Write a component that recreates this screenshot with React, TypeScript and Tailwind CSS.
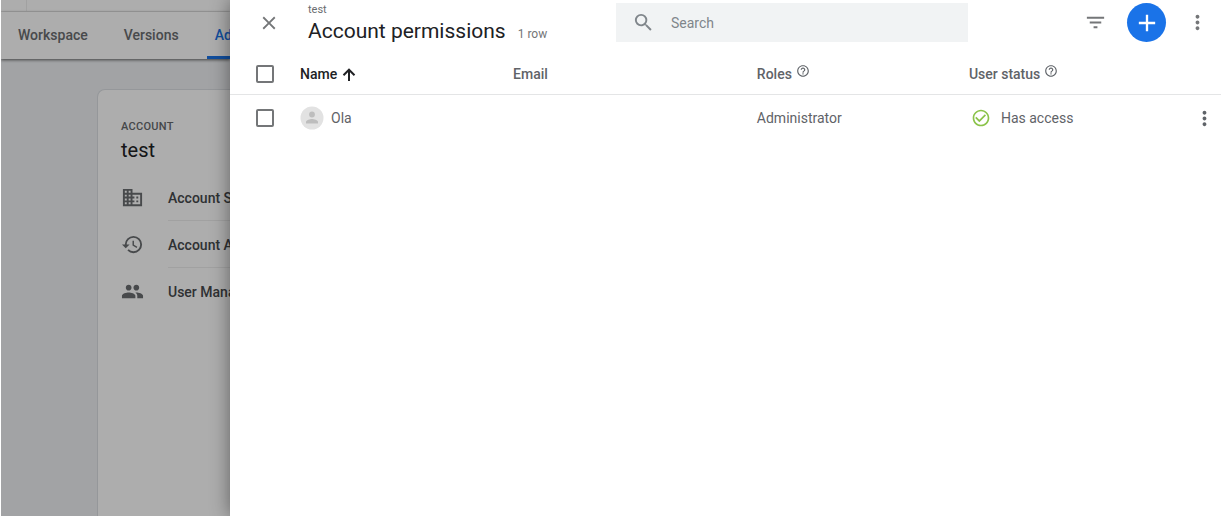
import {
  MdAdd,
  MdCheckCircleOutline,
  MdClose,
  MdDomain,
  MdFilterList,
  MdHelpOutline,
  MdHistory,
  MdMoreVert,
  MdPeople,
  MdSearch,
} from "react-icons/md";

const users = [{ name: "Ola", email: "", role: "Administrator", status: "Has access" }];

const accountLinks = [
  { label: "Account Settings", icon: MdDomain },
  { label: "Account Activity", icon: MdHistory },
  { label: "User Management", icon: MdPeople },
];

const checkboxClass =
  "block size-[18px] appearance-none rounded-[2px] border-2 border-[#747678] bg-white checked:bg-[#1a73e8]";

const AdminPage = () => {
  return (
    <div className="relative flex w-[230px] shrink-0 flex-col overflow-hidden border-l border-white bg-[#eff1f4] whitespace-nowrap">
      <div className="flex h-3 shrink-0 border-b border-[#eeeeee] bg-white">
        <div className="w-[26px] border-r border-[#eeeeee]" />
      </div>
      <nav className="z-10 flex h-[47px] shrink-0 bg-white pl-[17px] text-[14px] font-medium text-[#6a6d70] shadow-[0_1px_3px_rgba(0,0,0,0.6)]">
        <a href="#workspace" className="mr-9 flex items-center">
          Workspace
        </a>
        <a href="#versions" className="mr-7 flex items-center">
          Versions
        </a>
        <a
          href="#admin"
          className="flex items-center rounded-t-[3px] border-b-[3px] border-[#1a73e8] px-2 pt-[3px] text-[#1a73e8]"
        >
          Admin
        </a>
      </nav>
      <main className="flex grow flex-col pt-[30px] pl-24">
        <section className="w-80 grow rounded-tl-lg border border-b-0 border-[#dcdfe3] bg-white pt-7 pl-[23px]">
          <p className="text-[11px] leading-[18px] font-medium tracking-wide text-[#66696c]">ACCOUNT</p>
          <h2 className="mt-[2px] text-[20px] leading-6 text-[#202124]">test</h2>
          <ul className="mt-3">
            {accountLinks.map(({ label, icon: Icon }) => (
              <li key={label} className="group">
                <a href="#account" className="flex h-[47px] items-center text-[14px] font-medium text-[#46494c]">
                  <Icon className="mr-6 size-[23px] shrink-0 text-[#6a6d70]" />
                  <span className="flex h-full grow items-center border-b border-[#eeeeee] pt-[2px] group-last:border-transparent">
                    {label}
                  </span>
                </a>
              </li>
            ))}
          </ul>
        </section>
      </main>
      <div className="absolute inset-0 z-20 bg-black/32" />
    </div>
  );
};

const PanelHeader = () => {
  return (
    <header className="flex h-[54px] items-start pr-3 pl-7">
      <button type="button" aria-label="Close" className="mt-3 mr-7 text-[#747678]">
        <MdClose className="size-[22px]" />
      </button>
      <div className="w-[308px] shrink-0 pt-[2px]">
        <p className="text-[11px] leading-4 text-[#6a6d70]">test</p>
        <div className="flex items-baseline gap-3">
          <h1 className="text-[21px] leading-[26px] text-[#202124]">Account permissions</h1>
          <span className="text-[12px] text-[#747678]">1 row</span>
        </div>
      </div>
      <label className="mt-[3px] flex h-[39px] w-[37%] items-center gap-4 bg-[#f1f3f4] pl-4">
        <MdSearch className="size-[23px] shrink-0 text-[#80868b]" />
        <input
          type="text"
          aria-label="Search"
          placeholder="Search"
          className="w-full min-w-0 bg-transparent pt-[2px] text-[14px] outline-none placeholder:text-[#80868b]"
        />
      </label>
      <div className="ml-auto flex shrink-0 items-center pt-[3px] text-[#747678]">
        <button type="button" aria-label="Filter" className="mr-5">
          <MdFilterList className="size-[23px]" />
        </button>
        <button
          type="button"
          aria-label="Add user"
          className="mr-5 flex size-[39px] items-center justify-center rounded-full bg-[#1a73e8] text-white"
        >
          <MdAdd className="size-7" />
        </button>
        <button type="button" aria-label="More options">
          <MdMoreVert className="size-[23px]" />
        </button>
      </div>
    </header>
  );
};

const UsersTable = () => {
  return (
    <table className="w-full table-fixed text-left text-[14px] text-[#5f6368]">
      <colgroup>
        <col className="w-[70px]" />
        <col className="w-[21.5%]" />
        <col className="w-[24.6%]" />
        <col className="w-[21.4%]" />
        <col />
        <col className="w-7" />
      </colgroup>
      <thead>
        <tr className="h-10 border-b border-[#e4e5e6]">
          <th className="pl-[26px]">
            <input type="checkbox" aria-label="Select all" className={checkboxClass} />
          </th>
          <th className="pt-[2px] font-medium text-[#202124]">
            <span className="flex items-center gap-1">
              Name <SortArrow />
            </span>
          </th>
          <th className="pt-[2px] font-medium">Email</th>
          <th className="pt-[2px] font-medium">
            <span className="flex gap-1">
              Roles <MdHelpOutline className="size-[14px]" />
            </span>
          </th>
          <th className="pt-[2px] font-medium">
            <span className="flex gap-1">
              User status <MdHelpOutline className="size-[14px]" />
            </span>
          </th>
          <th aria-label="Actions" />
        </tr>
      </thead>
      <tbody>
        {users.map((user) => (
          <tr key={user.name} className="h-12">
            <td className="pl-[26px]">
              <input type="checkbox" aria-label={`Select ${user.name}`} className={checkboxClass} />
            </td>
            <td>
              <span className="flex items-center gap-[7px]">
                <Avatar />
                {user.name}
              </span>
            </td>
            <td>{user.email}</td>
            <td>{user.role}</td>
            <td>
              <span className="flex items-center gap-[10px] pl-[2px]">
                <MdCheckCircleOutline className="size-5 text-[#8bc34a]" />
                {user.status}
              </span>
            </td>
            <td>
              <button type="button" aria-label="User options" className="flex">
                <MdMoreVert className="size-[23px]" />
              </button>
            </td>
          </tr>
        ))}
      </tbody>
    </table>
  );
};

const SortArrow = () => {
  return (
    <svg viewBox="0 0 16 16" className="size-4" fill="none" stroke="currentColor" strokeWidth="2">
      <path d="M8 14V3M2.5 8.2 8 2.7l5.5 5.5" />
    </svg>
  );
};

const Avatar = () => {
  return (
    <svg viewBox="0 0 24 24" className="size-6">
      <circle cx="12" cy="12" r="11.5" fill="#e2e2e2" />
      <circle cx="12" cy="8.5" r="2.9" fill="#bdbdbd" />
      <path d="M6 17.5v-1.4c0-2.2 4-3.1 6-3.1s6 .9 6 3.1v1.4z" fill="#bdbdbd" />
    </svg>
  );
};

const App = () => {
  return (
    <div className="flex min-h-screen bg-white font-['Roboto',sans-serif]">
      <AdminPage />
      <div className="z-30 min-w-0 grow bg-white shadow-[0_0_18px_rgba(0,0,0,0.45)]">
        <PanelHeader />
        <UsersTable />
      </div>
    </div>
  );
};

export default App;
